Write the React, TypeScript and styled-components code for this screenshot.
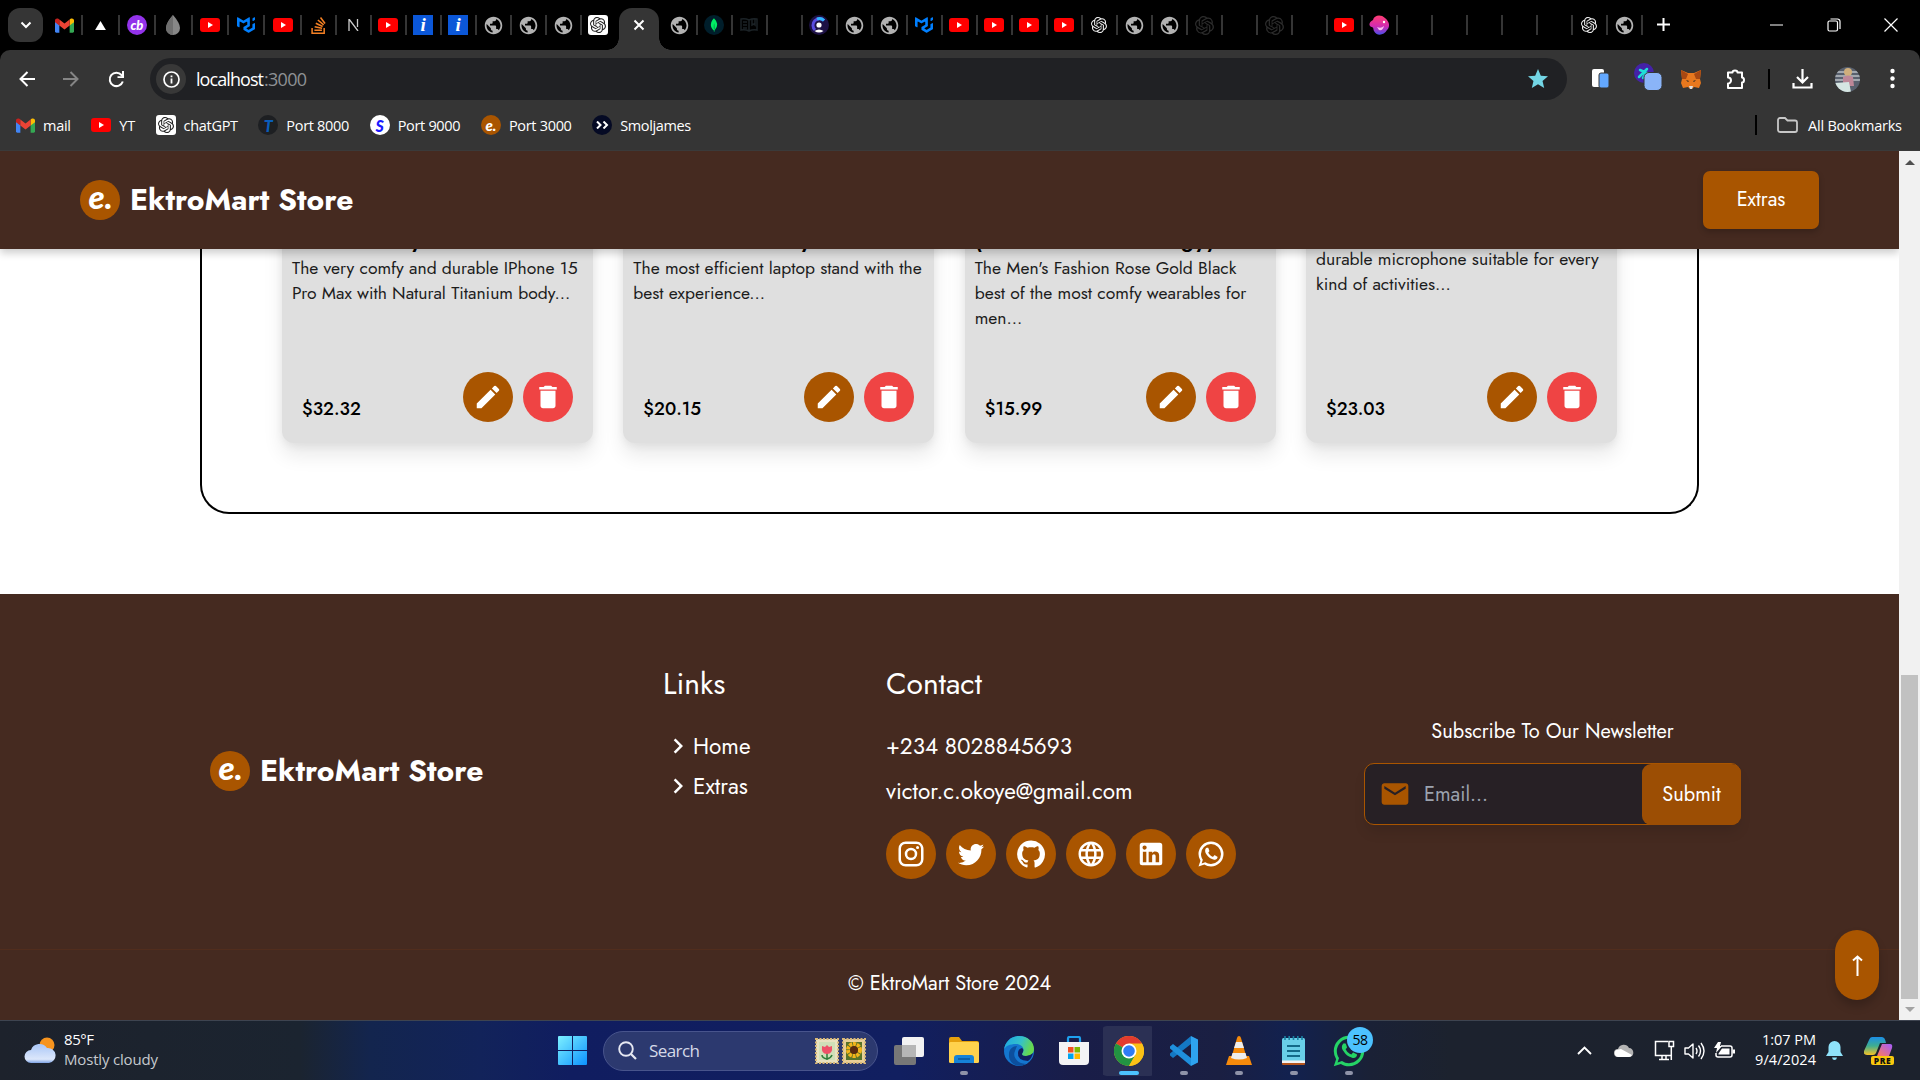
import React, { useLayoutEffect, useRef, useState, ReactNode } from "react";
import styled, { createGlobalStyle, css } from "styled-components";
import { MdEdit, MdDelete, MdPublic, MdLanguage, MdEmail, MdStar, MdChevronRight } from "react-icons/md";
import { SiOpenai, SiMui, SiStackoverflow, SiMongodb } from "react-icons/si";

const brand = 'Jost, Lato, "Open Sans", sans-serif';
const ui = '"Segoe UI", "Open Sans", "Noto Sans", sans-serif';
const brown = "#452a20";
const orange = "#a95500";

const Global = createGlobalStyle`
  * { box-sizing: border-box; }
  body { margin: 0; background: #fff; overflow: hidden; }
  svg { display: block; flex: none; }
`;

/* Text whose tracking is adjusted so that it fills a given measure. */
const FitSpan = styled.span`
  display: inline-block;
  white-space: nowrap;
`;
function Fit({ w, children }: { w: number; children: string }) {
  const ref = useRef<HTMLSpanElement>(null);
  const [ls, setLs] = useState(0);
  useLayoutEffect(() => {
    if (!ref.current) return;
    const natural = ref.current.getBoundingClientRect().width;
    setLs((w - natural) / Math.max(1, children.length - 1));
  }, [w, children]);
  return (
    <FitSpan ref={ref} style={{ letterSpacing: ls, marginRight: -ls }}>
      {children}
    </FitSpan>
  );
}

const Screen = styled.div`
  width: 1920px;
  height: 1080px;
  display: flex;
  flex-direction: column;
  overflow: hidden;
  font-family: ${ui};
`;

/* ---------- browser chrome ---------- */
const TabStrip = styled.div`
  height: 50px;
  background: #000;
  display: flex;
  padding-left: 8px;
  flex: none;
`;
const TabSearch = styled.div`
  width: 35px;
  height: 34px;
  margin: 8px 4px 0 0;
  border-radius: 12px;
  background: #353535;
  display: grid;
  place-items: center;
`;
const Tab = styled.div<{ $w?: number; $last?: boolean }>`
  width: ${(p) => p.$w ?? 35}px;
  height: 20px;
  margin-top: 15px;
  display: flex;
  align-items: center;
  justify-content: center;
  border-right: 2px solid ${(p) => (p.$last ? "transparent" : "#353535")};
  flex: none;
`;
const ActiveTab = styled.div`
  width: 40px;
  height: 42px;
  margin: 8px 4px 0 2px;
  padding-bottom: 8px;
  background: #353535;
  border-radius: 13px 13px 0 0;
  display: grid;
  place-items: center;
  position: relative;
  &::before, &::after {
    content: "";
    position: absolute;
    bottom: 0;
    width: 12px;
    height: 12px;
  }
  &::before { right: 100%; background: radial-gradient(circle at 0 0, transparent 11.5px, #353535 12px); }
  &::after { left: 100%; background: radial-gradient(circle at 100% 0, transparent 11.5px, #353535 12px); }
`;
const NewTab = styled.div`
  width: 41px;
  height: 49px;
  display: grid;
  place-items: center;
`;
const WindowButtons = styled.div`
  margin: 0 1px 0 auto;
  display: flex;
  height: 50px;
`;
const WindowButton = styled.div`
  width: 57px;
  display: grid;
  place-items: center;
`;
const ChromeBack = styled.div`
  background: #000;
`;
const ChromeBody = styled.div`
  height: 101px;
  background: #353535;
  border-radius: 10px 10px 0 0;
  border-bottom: 1px solid #3a3a3a;
  flex: none;
`;
const NavRow = styled.div`
  height: 58px;
  display: flex;
  align-items: center;
  padding-left: 15px;
`;
const NavIcon = styled.div<{ $w: number }>`
  width: ${(p) => p.$w}px;
  height: 42px;
  display: grid;
  place-items: center;
  flex: none;
`;
const AddressBar = styled.div`
  width: 1417px;
  height: 42px;
  margin-left: 8px;
  border-radius: 21px;
  background: #202124;
  display: flex;
  align-items: center;
  padding: 0 17px 0 6px;
  font-size: 18px;
  color: #fff;
  em { font-style: normal; color: #8e9195; }
  > svg { margin-left: auto; }
`;
const InfoBadge = styled.div`
  width: 30px;
  height: 30px;
  margin-right: 10px;
  border-radius: 50%;
  background: #383838;
  display: grid;
  place-items: center;
`;
const Divider = styled.div`
  width: 2px;
  height: 20px;
  background: #000;
`;
const Avatar = styled.div`
  width: 25px;
  height: 25px;
  border-radius: 50%;
  overflow: hidden;
`;
const BookmarkRow = styled.div`
  height: 34px;
  display: flex;
  align-items: center;
  padding: 0 18px 0 16px;
  font-size: 14.5px;
  color: #fff;
`;
const Bookmark = styled.div`
  display: flex;
  align-items: center;
  gap: 8px;
  margin-right: 20.3px;
`;
const AllBookmarks = styled.div`
  margin-left: auto;
  display: flex;
  align-items: center;
  svg { margin: 0 10px 0 20px; }
`;
const Disc = styled.div<{ $bg: string; $c?: string; $s?: number }>`
  width: 20px;
  height: 20px;
  border-radius: 50%;
  background: ${(p) => p.$bg};
  color: ${(p) => p.$c ?? "#fff"};
  display: grid;
  place-items: center;
  font: italic 900 ${(p) => p.$s ?? 15}px/17px Lato, sans-serif;
`;
const Tile = styled.div<{ $bg: string; $c: string }>`
  width: 20px;
  height: 20px;
  border-radius: ${(p) => (p.$bg === "#fff" ? 3 : 0)}px;
  background: ${(p) => p.$bg};
  color: ${(p) => p.$c};
  display: grid;
  place-items: center;
  font: italic bold 19px/20px "Liberation Serif", serif;
`;

/* ---------- page ---------- */
const Viewport = styled.div`
  height: 869px;
  display: flex;
  background: #fff;
  flex: none;
`;
const Page = styled.div`
  width: 1899px;
  display: flex;
  flex-direction: column;
  font-family: ${brand};
  position: relative;
  overflow: hidden;
`;
const ScrollBar = styled.div`
  width: 21px;
  background: #f1f1f1;
  display: flex;
  flex-direction: column;
  align-items: center;
  justify-content: space-between;
  padding: 9px 0 8px;
`;
const Thumb = styled.div`
  width: 17px;
  height: 324px;
  margin: auto 0 8px;
  background: #c1c1c1;
`;
const Header = styled.header`
  height: 98px;
  flex: none;
  background: ${brown};
  display: flex;
  align-items: center;
  justify-content: space-between;
  padding: 0 80px;
  position: relative;
  z-index: 2;
  box-shadow: 0 4px 8px rgba(0, 0, 0, 0.2);
`;
const Brand = styled.div`
  display: flex;
  align-items: center;
  gap: 10px;
  color: #fff;
  font-size: 30px;
  font-weight: 700;
  line-height: 40px;
  white-space: nowrap;
`;
const BrandMark = styled.div`
  width: 40px;
  height: 40px;
  padding-left: 1px;
  border-radius: 50%;
  background: ${orange};
  color: #fff;
  text-align: center;
  font: italic 900 33px/32px Lato, sans-serif;
`;
const ExtrasButton = styled.button`
  width: 116px;
  height: 58px;
  padding: 0;
  border: 0;
  border-radius: 7px;
  background: ${orange};
  color: #fff;
  font: 400 20px/24px ${brand};
  box-shadow: 0 3px 6px rgba(0, 0, 0, 0.2);
`;
const Panel = styled.main`
  width: 1499px;
  height: 314px;
  margin: -49px 0 0 200px;
  flex: none;
  border: 2px solid #000;
  border-top: 0;
  border-radius: 0 0 29px 29px;
  padding: 0 80px;
  display: flex;
  justify-content: space-between;
`;
const Card = styled.article`
  width: 311px;
  height: 243px;
  padding: 22px 20px 21px 10px;
  border-radius: 0 0 12px 12px;
  background: #dfdfdf;
  box-shadow: 0 12px 20px rgba(0, 0, 0, 0.09), 0 3px 8px rgba(0, 0, 0, 0.06);
  display: flex;
  flex-direction: column;
`;
const CardTitle = styled.h3`
  margin: 0;
  height: 34px;
  font-size: 22px;
  line-height: 34px;
  font-weight: 600;
  color: #000;
`;
const CardText = styled.div`
  font-size: 17.5px;
  font-weight: 400;
  line-height: 25px;
  color: #1c1c1c;
  white-space: nowrap;
`;
const CardFoot = styled.div`
  margin-top: auto;
  display: flex;
  gap: 10px;
  align-items: flex-end;
`;
const Price = styled.div`
  margin: 0 auto 0 10px;
  font-size: 18px;
  font-weight: 500;
  line-height: 26px;
  color: #000;
`;
const RoundButton = styled.div<{ $bg?: string }>`
  width: 50px;
  height: 50px;
  border-radius: 50%;
  background: ${(p) => p.$bg ?? orange};
  color: #fff;
  display: grid;
  place-items: center;
  flex: none;
`;
const Footer = styled.footer`
  margin-top: 80px;
  flex: 1;
  background: ${brown};
  color: #fff;
`;
const FooterMain = styled.div`
  height: 356px;
  display: flex;
  border-bottom: 1px solid #512d1d;
`;
const FooterCol = styled.div<{ $left: number; $top: number; $w: number }>`
  margin-left: ${(p) => p.$left}px;
  width: ${(p) => p.$w}px;
  padding-top: ${(p) => p.$top}px;
  flex: none;
`;
const FooterHead = styled.div`
  height: 40px;
  margin-bottom: 22px;
  font-size: 30px;
  line-height: 40px;
`;
const FooterLine = styled.div<{ $gap?: number }>`
  height: 40px;
  margin-bottom: ${(p) => p.$gap ?? 0}px;
  font-size: 22.5px;
  line-height: 40px;
  display: flex;
  align-items: center;
`;
const Socials = styled.div`
  display: flex;
  gap: 10px;
`;
const NewsHead = styled.div`
  height: 32px;
  margin-bottom: 15px;
  font-size: 20px;
  line-height: 32px;
  text-align: center;
`;
const NewsBox = styled.div`
  height: 62px;
  border: 1px solid ${orange};
  border-radius: 10px;
  background: #272025;
  display: flex;
  align-items: center;
  padding-left: 14px;
  font-size: 20px;
  color: #9ca3af;
  box-shadow: 0 9px 14px -3px rgba(0, 0, 0, 0.12);
  svg { margin-right: 13px; }
`;
const Submit = styled.div`
  width: 99px;
  height: 61px;
  margin: 0 -1px 0 auto;
  border-radius: 9px;
  background: #9c4e04;
  color: #fff;
  display: grid;
  place-items: center;
`;
const Copyright = styled.div`
  height: 68px;
  font-size: 20px;
  line-height: 68px;
  text-align: center;
`;
const ToTop = styled.div`
  position: absolute;
  z-index: 3;
  right: 20px;
  bottom: 20px;
  width: 44px;
  height: 70px;
  border-radius: 22px;
  background: ${orange};
  display: grid;
  place-items: center;
  box-shadow: 0 6px 10px rgba(0, 0, 0, 0.2);
`;

/* ---------- taskbar ---------- */
const TaskBar = styled.div`
  height: 60px;
  flex: none;
  display: flex;
  align-items: center;
  border-top: 1px solid #3e4450;
  background: linear-gradient(90deg, #1d222c 0, #1b2430 300px, #13254e 370px, #12235a 480px, #101d60 570px, #111f60 900px, #191d48 1080px, #1a1f42 1220px, #12214f 1290px, #1a2136 1370px, #1c222e 1450px, #1c222d 1920px);
`;
const Weather = styled.div`
  width: 558px;
  padding-left: 24px;
  display: flex;
  align-items: center;
  gap: 8px;
  font-size: 15px;
  line-height: 20px;
  color: #c6c9ce;
  div { display: flex; flex-direction: column; align-items: flex-start; padding-bottom: 4px; }
  div > :first-child { color: #fff; }
`;
const Search = styled.div`
  width: 275px;
  height: 40px;
  margin: 0 3px 0 16px;
  padding: 0 11px 0 14px;
  border: 1px solid #48548c;
  border-radius: 20px;
  background: #2c396f;
  display: flex;
  align-items: center;
  color: #d5d9e8;
  font-size: 17px;
  > svg:first-child { margin-right: 12px; }
  > svg:last-child { margin-left: auto; }
`;
const Task = styled.div<{ $mark?: "dot" | "bar" }>`
  width: 55px;
  height: 50px;
  display: grid;
  place-items: center;
  position: relative;
  flex: none;
  ${(p) => p.$mark === "bar" && css`
    background: linear-gradient(#2b3054, #2b3054) 2px 0 / 49px 50px no-repeat;
    border-radius: 6px;
  `}
  ${(p) => p.$mark && css`
    &::after {
      content: "";
      position: absolute;
      bottom: 1px;
      left: 50%;
      width: ${p.$mark === "bar" ? 20 : 8}px;
      height: 4px;
      border-radius: 2px;
      transform: translateX(-50%);
      background: ${p.$mark === "bar" ? "#4cc2ff" : "#8f93a8"};
    }
  `}
`;
const Count = styled.div`
  position: absolute;
  top: 1px;
  right: 3px;
  width: 26px;
  height: 26px;
  border-radius: 50%;
  background: #4cc2ff;
  color: #000;
  font-size: 14px;
  line-height: 25px;
  letter-spacing: -0.5px;
  text-align: center;
`;
const Tray = styled.div`
  margin-left: auto;
  padding-right: 15px;
  display: flex;
  align-items: center;
`;
const TrayIcon = styled.div<{ $w: number }>`
  width: ${(p) => p.$w}px;
  display: grid;
  place-items: center;
`;
const Clock = styled.div`
  width: 77px;
  padding-bottom: 2px;
  color: #fff;
  font-size: 14.5px;
  line-height: 20px;
  display: flex;
  flex-direction: column;
  align-items: flex-end;
`;

/* ---------- drawings ---------- */
const Svg = ({ w, h, vb, children }: { w: number; h?: number; vb: string; children: ReactNode }) => (
  <svg width={w} height={h ?? w} viewBox={vb} fill="none">{children}</svg>
);
const Glyph = ({ d, size = 30 }: { d: string; size?: number }) => (
  <Svg w={size} vb="0 0 24 24"><path d={d} fill="#fff" /></Svg>
);
const Gmail = () => (
  <Svg w={19} h={15} vb="0 0 24 18">
    <path d="M0 3v13.4A1.6 1.6 0 0 0 1.6 18H5.5V8z" fill="#4285f4" />
    <path d="M24 3v13.4a1.6 1.6 0 0 1-1.6 1.6h-3.9V8z" fill="#34a853" />
    <path d="M0 2.5C0 .2 2.6-.7 4.3.6L5.5 1.5V9L0 4.8z" fill="#c5221f" />
    <path d="M24 2.5c0-2.3-2.6-3.200-4.300-1.900l-1.200.9V9L24 4.800z" fill="#fbbc04" />
    <path d="M5.500 1.500 12 6.400l6.500-4.900V9L12 13.900 5.500 9z" fill="#ea4335" />
  </Svg>
);
const YouTube = () => (
  <Svg w={20} h={14} vb="0 0 20 14">
    <rect width="20" height="14" rx="3" fill="#f00" />
    <path d="M8 4v6l5-3z" fill="#fff" />
  </Svg>
);
const Clerk = () => (
  <Svg w={20} vb="0 0 20 20">
    <circle cx="10" cy="10" r="10" fill="#1d1145" />
    <path d="M15 5.500a6.500 6.500 0 1 0-9 9.500" stroke="#5a4be0" strokeWidth="3" />
    <path d="M15 5.500a6.500 6.500 0 0 0-7-1.500" stroke="#2fb4ff" strokeWidth="3" />
    <circle cx="10" cy="10" r="2.600" fill="#fff" />
    <path d="M5.500 16q4.500-3 9 0-4.500 3-9 0" fill="#fff" />
  </Svg>
);
const Pink = () => (
  <Svg w={20} vb="0 0 20 20">
    <defs><linearGradient id="pk" x1="0" y1="0" x2="0" y2="1"><stop stopColor="#ff3d71" /><stop offset=".55" stopColor="#d42bb0" /><stop offset="1" stopColor="#4b4de8" /></linearGradient></defs>
    <path d="M4 5C5 0 12-1 16 3c5 4 5 9 2 12-3 6-11 6-13 1-1-2 0-3-2-4-4-1-3-5 1-7z" fill="url(#pk)" />
    <path d="M8 12q4 2 7-1-1 5-5 4z" fill="#ffc0f0" />
    <circle cx="15" cy="7" r="1.200" fill="#fff" />
  </Svg>
);
const Book = () => (
  <Svg w={18} h={16} vb="0 0 18 16">
    <path d="M9 3Q5 1 1 2v11q4-1 8 1 4-2 8-1V2q-4-1-8 1v11M3 5h4M3 8h4M3 11h4M12 2v6l2-1 1 1V2" stroke="#1b2226" strokeWidth="1.500" />
  </Svg>
);
const Drop = () => (
  <Svg w={14} h={20} vb="0 0 14 20">
    <path d="M7 0q7 8 7 13a7 7 0 0 1-14 0Q0 8 7 0z" fill="#878787" />
    <path d="M7 0v20a7 7 0 0 1-7-7Q0 8 7 0z" fill="#6f6f6f" />
  </Svg>
);

const icon: Record<string, ReactNode> = {
  gmail: <Gmail />,
  vercel: <Svg w={11} h={9} vb="0 0 12 10"><path d="M6 0l6 10H0z" fill="#fff" /></Svg>,
  cb: <Disc $bg="#9333ea" $s={13}>cb</Disc>,
  drop: <Drop />,
  yt: <YouTube />,
  mui: <SiMui size={18} color="#007fff" />,
  so: <SiStackoverflow size={17} color="#f48024" />,
  next: <Svg w={11} h={12} vb="0 0 11 12"><path d="M1 12V0l9 12M9.500 0v8" stroke="#ccc" strokeWidth="1.300" /></Svg>,
  info: <Tile $bg="#0b57d8" $c="#fff">i</Tile>,
  globe: <MdPublic size={21} color="#b2b2b2" />,
  gptTile: <Tile $bg="#fff" $c="#222"><SiOpenai size={16} /></Tile>,
  gpt: <SiOpenai size={16} color="#eee" />,
  gptDark: <SiOpenai size={19} color="#2c2c2c" />,
  mongo: <Disc $bg="#001e2b"><SiMongodb size={14} color="#00ed64" /></Disc>,
  book: <Book />,
  clerk: <Clerk />,
  pink: <Pink />,
};
const leftTabs = "gmail vercel cb drop yt mui yt so next yt info info globe globe globe gptTile".split(" ");
const rightTabs = "globe mongo book - clerk globe globe mui yt yt yt yt gpt globe globe gptDark - gptDark - yt pink - - - - - gpt globe".split(" ");

const bookmarks: [ReactNode, string, number][] = [
  [icon.gmail, "mail", 28],
  [<YouTube />, "YT", 16],
  [icon.gptTile, "chatGPT", 54.5],
  [<Disc $bg="#1d1f22" $c="#0a5dba" $s={16}>T</Disc>, "Port 8000", 63],
  [<Disc $bg="#fff" $c="#1a1aff" $s={16}>S</Disc>, "Port 9000", 63],
  [<Disc $bg={orange}>e.</Disc>, "Port 3000", 63],
  [<Disc $bg="#050a24"><Svg w={14} h={8} vb="0 0 14 8"><path d="M2 .5 5.500 4 2 7.500M8.500.5 12 4 8.500 7.500" stroke="#fff" strokeWidth="2" /></Svg></Disc>, "Smoljames", 71],
];

const products: { title?: [string, number]; lines: string[]; price: string }[] = [
  { title: ["Durable Body", 130], lines: ["The very comfy and durable IPhone 15", "Pro Max with Natural Titanium body..."], price: "$32.32" },
  { title: ["Modern Stand Stay", 178], lines: ["The most efficient laptop stand with the", "best experience..."], price: "$20.15" },
  { title: ["(Watches Technology)", 240], lines: ["The Men's Fashion Rose Gold Black", "best of the most comfy wearables for", "men..."], price: "$15.99" },
  { lines: ["The most efficient and", "durable microphone suitable for every", "kind of activities..."], price: "$23.03" },
];

const socials = [
  "M7.8 2h8.4C19.4 2 22 4.6 22 7.8v8.4a5.8 5.8 0 0 1-5.8 5.8H7.8C4.6 22 2 19.4 2 16.2V7.8A5.8 5.8 0 0 1 7.8 2m-.2 2A3.6 3.6 0 0 0 4 7.6v8.8C4 18.39 5.61 20 7.6 20h8.8a3.6 3.6 0 0 0 3.6-3.6V7.6C20 5.61 18.39 4 16.4 4H7.6m9.65 1.5a1.25 1.25 0 0 1 1.25 1.25A1.25 1.25 0 0 1 17.25 8 1.25 1.25 0 0 1 16 6.75a1.25 1.25 0 0 1 1.25-1.25M12 7a5 5 0 0 1 5 5 5 5 0 0 1-5 5 5 5 0 0 1-5-5 5 5 0 0 1 5-5m0 2a3 3 0 0 0-3 3 3 3 0 0 0 3 3 3 3 0 0 0 3-3 3 3 0 0 0-3-3z",
  "M22.46 6c-.77.35-1.6.58-2.46.69.88-.53 1.56-1.37 1.88-2.38-.83.5-1.75.85-2.72 1.05C18.37 4.5 17.26 4 16 4c-2.35 0-4.27 1.92-4.27 4.29 0 .34.04.67.11.98C8.28 9.09 5.11 7.38 3 4.79c-.37.63-.58 1.37-.58 2.15 0 1.49.75 2.81 1.91 3.56-.71 0-1.37-.2-1.95-.5v.03c0 2.08 1.48 3.82 3.44 4.21a4.22 4.22 0 0 1-1.93.07 4.28 4.28 0 0 0 4 2.98 8.521 8.521 0 0 1-5.33 1.84c-.34 0-.68-.02-1.02-.06C3.44 20.29 5.7 21 8.12 21 16 21 20.33 14.46 20.33 8.79c0-.19 0-.37-.01-.56.84-.6 1.56-1.36 2.14-2.23z",
  "M12 1.27a11 11 0 00-3.48 21.46c.55.09.73-.28.73-.55v-1.84c-3.03.64-3.67-1.46-3.67-1.46-.55-1.29-1.28-1.65-1.28-1.65-.92-.65.1-.65.1-.65 1.1 0 1.73 1.1 1.73 1.1.92 1.65 2.57 1.2 3.21.92a2 2 0 01.64-1.47c-2.47-.27-5.04-1.19-5.04-5.5 0-1.1.46-2.1 1.2-2.84a3.76 3.76 0 010-2.93s.91-.28 3.11 1.1c1.8-.49 3.7-.49 5.5 0 2.1-1.38 3.02-1.1 3.02-1.1a3.76 3.76 0 01.1 2.93c.83.74 1.2 1.74 1.2 2.94 0 4.21-2.57 5.13-5.04 5.4.45.37.82.92.82 2.02v3.03c0 .27.1.64.73.55A11 11 0 0012 1.27",
  "",
  "M19 3a2 2 0 0 1 2 2v14a2 2 0 0 1-2 2H5a2 2 0 0 1-2-2V5a2 2 0 0 1 2-2h14m-.5 15.5v-5.3a3.26 3.26 0 0 0-3.26-3.26c-.85 0-1.84.52-2.32 1.3v-1.11h-2.79v8.37h2.79v-4.93c0-.77.62-1.4 1.39-1.4a1.4 1.4 0 0 1 1.4 1.4v4.93h2.79M6.88 8.56a1.68 1.68 0 0 0 1.68-1.68c0-.93-.75-1.69-1.68-1.69a1.69 1.69 0 0 0-1.69 1.69c0 .93.76 1.68 1.69 1.68m1.39 9.94v-8.37H5.5v8.37h2.77z",
  "M16.75 13.96c.25.13.41.2.46.3.06.11.04.61-.21 1.18-.2.56-1.24 1.1-1.7 1.12-.46.02-.47.36-2.96-.73-2.49-1.09-3.99-3.75-4.11-3.92-.12-.17-.96-1.38-.92-2.61.05-1.22.69-1.8.95-2.04.24-.26.51-.29.68-.26h.47c.15 0 .36-.06.55.45l.69 1.87c.06.13.1.28.01.44l-.27.41-.39.42c-.12.12-.26.25-.12.5.12.26.62 1.09 1.32 1.78.91.88 1.71 1.17 1.95 1.3.24.14.39.12.54-.04l.81-.94c.19-.25.35-.19.58-.11l1.67.88M12 2a10 10 0 0 1 10 10 10 10 0 0 1-10 10c-1.97 0-3.8-.57-5.35-1.55L2 22l1.55-4.65A9.969 9.969 0 0 1 2 12 10 10 0 0 1 12 2m0 2a8 8 0 0 0-8 8c0 1.72.54 3.31 1.46 4.61L4.5 19.5l2.89-.96A7.95 7.95 0 0 0 12 20a8 8 0 0 0 8-8 8 8 0 0 0-8-8z",
];

function Chrome() {
  return (
    <>
      <TabStrip>
        <TabSearch><Svg w={12} h={8} vb="0 0 12 8"><path d="M1.500 1.500 6 6l4.500-4.500" stroke="#fff" strokeWidth="2" /></Svg></TabSearch>
        {leftTabs.map((t, i) => <Tab key={i} $w={i < 7 ? 36.4 : 35} $last={i === 15}>{icon[t]}</Tab>)}
        <ActiveTab><Svg w={12} vb="0 0 12 12"><path d="M1.500 1.500l9 9m0-9-9 9" stroke="#fff" strokeWidth="2" /></Svg></ActiveTab>
        {rightTabs.map((t, i) => <Tab key={i}>{icon[t]}</Tab>)}
        <NewTab><Svg w={13} vb="0 0 13 13"><path d="M6.500 0v13M0 6.500h13" stroke="#fff" strokeWidth="2" /></Svg></NewTab>
        <WindowButtons>
          <WindowButton><Svg w={13} h={2} vb="0 0 13 2"><path d="M0 1h13" stroke="#fff" /></Svg></WindowButton>
          <WindowButton><Svg w={14} vb="0 0 14 14"><rect x="1" y="3" width="9.500" height="10" rx="1.500" stroke="#fff" strokeWidth="1.200" /><path d="M3.500 1h7A2.500 2.500 0 0 1 13 3.500V11" stroke="#fff" strokeWidth="1.200" /></Svg></WindowButton>
          <WindowButton><Svg w={14} vb="0 0 14 14"><path d="M.5.5l13 13m0-13-13 13" stroke="#fff" strokeWidth="1.200" /></Svg></WindowButton>
        </WindowButtons>
      </TabStrip>
      <ChromeBack><ChromeBody>
        <NavRow>
          <NavIcon $w={23}><Svg w={16} vb="0 0 16 16"><path d="M16 8H1.500M8.500 1l-7 7 7 7" stroke="#fff" strokeWidth="2" /></Svg></NavIcon>
          <NavIcon $w={66}><Svg w={16} vb="0 0 16 16"><path d="M0 8h14.500M7.500 1l7 7-7 7" stroke="#858585" strokeWidth="2" /></Svg></NavIcon>
          <NavIcon $w={25}><Svg w={17} vb="0 0 17 17"><path d="M14.800 10.500A6.700 6.700 0 1 1 13.500 4l2 2" stroke="#fff" strokeWidth="2" /><path d="M16 0v7H9.500V5.200H14V0z" fill="#fff" /></Svg></NavIcon>
          <NavIcon $w={13} />
          <AddressBar>
            <InfoBadge><Svg w={17} vb="0 0 17 17"><circle cx="8.500" cy="8.500" r="7.500" stroke="#fff" strokeWidth="1.700" /><path d="M8.500 7.500v5M8.500 4.500v1.800" stroke="#fff" strokeWidth="1.800" /></Svg></InfoBadge>
            <Fit w={68}>localhost</Fit><em><Fit w={43}>:3000</Fit></em>
            <MdStar size={24} color="#73d6e5" />
          </AddressBar>
          <NavIcon $w={67}><Svg w={17} h={20} vb="0 0 17 20"><rect width="12" height="18" rx="2" fill="#fff" /><rect x="7" y="4" width="10" height="15" rx="2" fill="#63a8ff" stroke="#353535" /></Svg></NavIcon>
          <NavIcon $w={25}><Svg w={28} h={34} vb="0 -1 28 34"><circle cx="10" cy="10" r="10" fill="#4422a8" /><path d="M5 14 13 6M6 7l7 3M9 15l3-5" stroke="#1fe0d8" strokeWidth="2.500" strokeLinecap="round" /><rect x="10" y="9.500" width="18" height="18" rx="5" fill="#8ab4f8" stroke="#353535" /></Svg></NavIcon>
          <NavIcon $w={63}><Svg w={20} h={19} vb="0 0 20 19"><path d="M0 0l7 3h6l7-3-1 9 1 4-2 5-5-1-2 2H9l-2-2-5 1-2-5 1-4z" fill="#e8781e" /><path d="M0 0l7 4-2 5H1zM20 0l-7 4 2 5h4z" fill="#a94812" /><path d="M8 16h4l-1 3H9z" fill="#ddd" /><path d="M5 10l3 1-1 1zM15 10l-3 1 1 1z" fill="#222" /></Svg></NavIcon>
          <NavIcon $w={28}><Svg w={22} vb="0 0 22 22"><path d="M3 4.500h4.500a2.500 2 0 0 1 5 0H17v5a2 2.500 0 0 1 0 5V20H3v-4.500a3 3 0 0 0 0-6z" stroke="#fff" strokeWidth="2" strokeLinejoin="round" /></Svg></NavIcon>
          <NavIcon $w={37}><Divider /></NavIcon>
          <NavIcon $w={30}><Svg w={21} h={20} vb="0 0 21 20"><path d="M10.500 0v13M5 8l5.500 5.500L16 8M1.500 14v4.500h18V14" stroke="#fff" strokeWidth="2.200" /></Svg></NavIcon>
          <NavIcon $w={60}><Avatar><Svg w={25} vb="0 0 25 25"><rect width="25" height="25" fill="#58606e" /><path d="M0 5h25M0 9h25M0 13h25" stroke="#b9bec4" strokeWidth="1.500" /><circle cx="13" cy="5" r="4" fill="#cfae7c" /><path d="M8 10q5-3 10 0l1 9H8z" fill="#bd8798" /><path d="M0 16l14-1 2 10H0z" fill="#d5e5e2" /></Svg></Avatar></NavIcon>
          <NavIcon $w={30}><Svg w={5} h={22} vb="0 0 5 22"><circle cx="2.500" cy="3" r="2.200" fill="#fff" /><circle cx="2.500" cy="10.500" r="2.200" fill="#fff" /><circle cx="2.500" cy="18" r="2.200" fill="#fff" /></Svg></NavIcon>
        </NavRow>
        <BookmarkRow>
          {bookmarks.map(([ic, label, w]) => <Bookmark key={label}>{ic}<Fit w={w}>{label}</Fit></Bookmark>)}
          <AllBookmarks>
            <Divider />
            <Svg w={21} h={16} vb="0 0 21 16"><path d="M1 3a2 2 0 0 1 2-2h5l2.500 2.500H18a2 2 0 0 1 2 2V13a2 2 0 0 1-2 2H3a2 2 0 0 1-2-2z" stroke="#c7c7c7" strokeWidth="1.800" /></Svg>
            <Fit w={94}>All Bookmarks</Fit>
          </AllBookmarks>
        </BookmarkRow>
      </ChromeBody></ChromeBack>
    </>
  );
}

function Store() {
  return (
    <Viewport>
      <Page>
        <Header>
          <Brand><BrandMark>e.</BrandMark>EktroMart Store</Brand>
          <ExtrasButton>Extras</ExtrasButton>
        </Header>
        <Panel>
          {products.map((p) => (
            <Card key={p.price}>
              {p.title && <CardTitle><Fit w={p.title[1]}>{p.title[0]}</Fit></CardTitle>}
              <CardText>{p.lines.map((t) => <div key={t}>{t}</div>)}</CardText>
              <CardFoot>
                <Price>{p.price}</Price>
                <RoundButton><MdEdit size={30} /></RoundButton>
                <RoundButton $bg="#ef4444"><MdDelete size={30} /></RoundButton>
              </CardFoot>
            </Card>
          ))}
        </Panel>
        <Footer>
          <FooterMain>
            <FooterCol $left={210} $top={157} $w={300}><Brand><BrandMark>e.</BrandMark>EktroMart Store</Brand></FooterCol>
            <FooterCol $left={153} $top={70} $w={120}>
              <FooterHead>Links</FooterHead>
              <FooterLine><MdChevronRight size={30} />Home</FooterLine>
              <FooterLine><MdChevronRight size={30} />Extras</FooterLine>
            </FooterCol>
            <FooterCol $left={103} $top={70} $w={350}>
              <FooterHead>Contact</FooterHead>
              <FooterLine $gap={5}>+234 8028845693</FooterLine>
              <FooterLine $gap={18}>victor.c.okoye@gmail.com</FooterLine>
              <Socials>
                {socials.map((d, i) => <RoundButton key={i}>{d ? <Glyph d={d} /> : <MdLanguage size={30} />}</RoundButton>)}
              </Socials>
            </FooterCol>
            <FooterCol $left={128} $top={122} $w={377}>
              <NewsHead>Subscribe To Our Newsletter</NewsHead>
              <NewsBox><MdEmail size={32} color={orange} />Email...<Submit>Submit</Submit></NewsBox>
            </FooterCol>
          </FooterMain>
          <Copyright>© EktroMart Store 2024</Copyright>
        </Footer>
        <ToTop><Svg w={11} h={21} vb="0 0 11 21"><path d="M5.500 21V1.500M1 5.500l4.500-4 4.500 4" stroke="#fff" strokeWidth="2" /></Svg></ToTop>
      </Page>
      <ScrollBar>
        <Svg w={10} h={5} vb="0 0 10 5"><path d="M0 5 5 0l5 5z" fill="#505050" /></Svg>
        <Thumb />
        <Svg w={10} h={5} vb="0 0 10 5"><path d="M0 0l5 5 5-5z" fill="#a3a3a3" /></Svg>
      </ScrollBar>
    </Viewport>
  );
}

function Taskbar() {
  return (
    <TaskBar>
      <Weather>
        <Svg w={32} h={27} vb="0 0 32 27">
          <defs><linearGradient id="cl" x1="0" y1="0" x2="0" y2="1"><stop stopColor="#a9c6f7" /><stop offset=".8" stopColor="#dce7fb" /><stop offset="1" stopColor="#7ea3e6" /></linearGradient></defs>
          <circle cx="23" cy="8" r="7.500" fill="#f7941e" /><path d="M7 26a6.500 6.500 0 0 1 0-13A9 9 0 0 1 23 11a7.500 7.500 0 0 1 2 15z" fill="url(#cl)" />
        </Svg>
        <div><Fit w={30}>85°F</Fit><Fit w={94}>Mostly cloudy</Fit></div>
      </Weather>
      <Svg w={29} vb="0 0 29 29">
        <defs><linearGradient id="wn" x1="0" y1="0" x2="1" y2="1"><stop stopColor="#7df0ff" /><stop offset="1" stopColor="#0c92ff" /></linearGradient></defs>
        <path d="M1 0h13v14H0V1q0-1 1-1zM15 0h13q1 0 1 1v13H15zM0 15h14v14H1q-1 0-1-1zM15 15h14v13q0 1-1 1H15z" fill="url(#wn)" />
      </Svg>
      <Search>
        <Svg w={19} vb="0 0 19 19"><circle cx="8" cy="8" r="6.800" stroke="#e6e8f2" strokeWidth="1.900" /><path d="M13 13l5 5" stroke="#e6e8f2" strokeWidth="2.200" /></Svg>
        <Fit w={51}>Search</Fit>
        <Svg w={51} h={26} vb="0 0 51 26">
          <rect x="1" y="1" width="22" height="24" fill="#e9e2c0" stroke="#d9b877" strokeWidth="2" strokeDasharray="2 1.500" /><rect x="4" y="4" width="16" height="18" fill="#cfe0b8" />
          <path d="M12 15v7M12 21q-5-1-5-4M12 21q4-1 5-4" stroke="#2f7d3a" strokeWidth="1.500" /><path d="M7 8l3 1 2-2 2 2 3-1q1 8-5 8t-5-8z" fill="#ee5168" />
          <rect x="28" y="1" width="22" height="24" fill="#e8cf98" stroke="#d9b877" strokeWidth="2" strokeDasharray="2 1.500" /><rect x="31" y="4" width="16" height="18" fill="#57732a" />
          <circle cx="39" cy="12" r="6" stroke="#f4b41a" strokeWidth="4" strokeDasharray="3 .8" /><circle cx="39" cy="12" r="4" fill="#5a2a0e" />
        </Svg>
      </Search>
      <Task><Svg w={30} h={28} vb="0 0 30 28"><rect x="8" width="22" height="20" rx="2" fill="#f2f2f2" /><rect y="8" width="22" height="20" rx="2" fill="#777" /><path d="M8 8h14v12H8z" fill="#b6b6b6" /></Svg></Task>
      <Task $mark="dot"><Svg w={30} h={27} vb="0 0 30 27"><path d="M0 2q0-2 2-2h8l3 4h15q2 0 2 2v4H0z" fill="#e5a00d" /><rect y="5" width="30" height="21" rx="1.500" fill="#ffd24d" /><path d="M5 26v-5q0-3 3-3h14q3 0 3 3v5z" fill="#1683d8" /><path d="M9 22h12" stroke="#0a569c" strokeWidth="1.500" /></Svg></Task>
      <Task><Svg w={30} vb="0 0 30 30">
        <defs><linearGradient id="eg" x1="0" y1="0" x2="1" y2=".3"><stop stopColor="#1ba6e4" /><stop offset=".6" stopColor="#35c1c9" /><stop offset="1" stopColor="#66d84e" /></linearGradient></defs>
        <circle cx="15" cy="15" r="15" fill="#1476cf" /><path d="M0 14C1 5 8 0 15 0c9 0 15 6 15 13 0 5-4 7-8 7-5 0-5-2-3-4 2-4-2-8-7-8C6 8 1 10 0 14z" fill="url(#eg)" />
        <path d="M11 15c-3 6 3 13 11 13-9 5-18-1-17-10 0-5 4-8 8-8q-1 2-2 5z" fill="#0c4f9d" /><path d="M19 16q-3 4 3 4 4 0 7-3-1 5-5 8-11-1-10-8 0-4 4-5 2 1 1 4z" fill="#111f60" />
      </Svg></Task>
      <Task><Svg w={30} h={30} vb="0 0 30 30"><path d="M9 8V2.500Q9 1 10.500 1h9Q21 1 21 2.500V8" stroke="#1ea0ee" strokeWidth="2.200" /><path d="M0 6h30v19q0 4-4 4H4q-4 0-4-4z" fill="#f3f3f5" /><path d="M9 11h5.500v5.500H9z" fill="#f25022" /><path d="M15.500 11H21v5.500h-5.500z" fill="#7fba00" /><path d="M9 17.500h5.500V23H9z" fill="#00a4ef" /><path d="M15.500 17.500H21V23h-5.500z" fill="#ffb900" /></Svg></Task>
      <Task $mark="bar"><Svg w={30} vb="0 0 30 30"><circle cx="15" cy="15" r="15" fill="#fbc116" /><path d="M15 15 2 7.500A15 15 0 0 1 28 7.500z" fill="#e33b2e" /><path d="M2 7.500A15 15 0 0 0 15 30l6.500-11.200L15 15z" fill="#229342" /><path d="M28 7.500H15v7.500l6.500 3.800L15 30A15 15 0 0 0 28 7.500z" fill="#fbc116" /><circle cx="15" cy="15" r="7.500" fill="#fff" /><circle cx="15" cy="15" r="5.800" fill="#2f7cf6" /></Svg></Task>
      <Task $mark="dot"><Svg w={30} vb="0 0 30 30"><path d="M22 0l7 3.500v23L22 30z" fill="#2ea3ef" /><path d="M22 0v8L4 22 1 19.500v-2z" fill="#1478c4" /><path d="M22 30v-8L4 8 1 10.500v2z" fill="#1f90dd" /></Svg></Task>
      <Task $mark="dot"><Svg w={26} h={30} vb="0 0 26 30"><path d="M3 20h20l3 9H0z" fill="#f58a0b" /><path d="M13 0q1.500 0 2 2l6 21q-8 4-16 0L11 2q.5-2 2-2z" fill="#f58a0b" /><path d="M10 6h6l2 6H8zM6.500 17h13l1.500 5q-8 3-16 0z" fill="#eee" /></Svg></Task>
      <Task $mark="dot"><Svg w={23} h={29} vb="0 0 23 29"><rect y="22" width="23" height="7" rx="1" fill="#b5541c" /><rect y="2" width="23" height="24" rx="1.500" fill="#69cfe8" /><path d="M0 24.500h23V27H0z" fill="#f2f2f2" /><path d="M5 10h13M5 15h13M5 20h13" stroke="#136a88" strokeWidth="2" /><path d="M3 0v4M7.200 0v4M11.500 0v4M15.800 0v4M20 0v4" stroke="#1a83a3" strokeWidth="1.600" /></Svg></Task>
      <Task $mark="dot"><Svg w={32} vb="1.5 1.5 21 21"><path d={socials[5]} fill="#25d366" /></Svg><Count>58</Count></Task>
      <Tray>
        <TrayIcon $w={30}><Svg w={15} h={9} vb="0 0 15 9"><path d="M1 8l6.500-6.500L14 8" stroke="#fff" strokeWidth="1.900" /></Svg></TrayIcon>
        <TrayIcon $w={50}><Svg w={20} h={13} vb="0 0 20 13"><path d="M4 13a4 4 0 0 1 0-8 6 6 0 0 1 11-1 4.600 4.600 0 0 1 1 9z" fill="#b4b4b4" /><path d="M4 13a4 4 0 0 1-2-7l5-1 11 6q-1 2-3 2z" fill="#fff" /></Svg></TrayIcon>
        <TrayIcon $w={30}><Svg w={21} h={21} vb="0 0 21 21"><path d="M14 1.500H1.500v14H18M5 19.500h10M8 16v3M12 16v3" stroke="#fff" strokeWidth="1.500" /><path d="M15 1.500h4.500v5H15zM17.300 7v13" stroke="#fff" strokeWidth="1.500" /></Svg></TrayIcon>
        <TrayIcon $w={30}><Svg w={21} h={18} vb="0 0 21 18"><path d="M1 6h3.500L9 2v14l-4.500-4H1z" stroke="#fff" strokeWidth="1.400" strokeLinejoin="round" /><path d="M12 6q2 3 0 6M14.500 3.500q4 5.500 0 11M17 1q6 8 0 16" stroke="#fff" strokeWidth="1.400" /></Svg></TrayIcon>
        <TrayIcon $w={30}><Svg w={21} h={17} vb="0 0 21 17"><path d="M7 4h9q2 0 2 2v7q0 2-2 2H4q-2 0-2-2v-2" stroke="#fff" strokeWidth="1.500" /><path d="M8 6.500h7.500v6H4.500v-1z" fill="#fff" /><path d="M4 0h3L6 4h2l-6 7 1-5H0zM18.500 7.500H21v4h-2.500z" fill="#fff" /></Svg></TrayIcon>
        <Clock><Fit w={54}>1:07 PM</Fit><Fit w={61}>9/4/2024</Fit></Clock>
        <TrayIcon $w={37}><Svg w={17} h={19} vb="0 0 17 19"><path d="M8.500 0A6 6 0 0 1 14.500 6v5l2.500 4H0l2.500-4V6a6 6 0 0 1 6-6zM6 16.500h5q-.5 2.500-2.500 2.500T6 16.500z" fill="#8fe3fb" /></Svg></TrayIcon>
        <TrayIcon $w={52}>
          <Svg w={30} h={28} vb="0 0 30 28">
            <defs><linearGradient id="ca" x1="0" y1="0" x2="0" y2="1"><stop stopColor="#1b8ee6" /><stop offset=".5" stopColor="#3fae8f" /><stop offset="1" stopColor="#f7c325" /></linearGradient><linearGradient id="cb" x1="1" y1="0" x2="0" y2="1"><stop stopColor="#a45cff" /><stop offset="1" stopColor="#ff7a59" /></linearGradient></defs>
            <path d="M8 0h10q3 0 4 6h-6l-4 10q-1 2-3 2H3q-4 0-3-4L5 3q1-3 3-3z" fill="url(#ca)" /><path d="M18 7h8q3 0 2 4l-3 8H13z" fill="url(#cb)" />
            <rect x="7" y="19" width="23" height="9" rx="2" fill="#f9c80e" /><text x="18.500" y="26.700" textAnchor="middle" fontFamily="Open Sans, sans-serif" fontWeight="800" fontSize="8.500" letterSpacing=".5" fill="#111">PRE</text>
          </Svg>
        </TrayIcon>
      </Tray>
    </TaskBar>
  );
}

export default function App() {
  return (
    <Screen>
      <Global />
      <Chrome />
      <Store />
      <Taskbar />
    </Screen>
  );
}
